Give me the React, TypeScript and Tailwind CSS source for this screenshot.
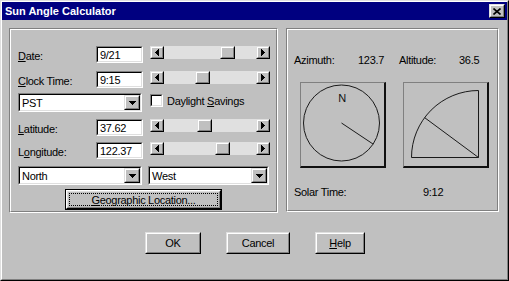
import React from "react";

type P = { className?: string; children?: React.ReactNode };

function Sunken({ className = "", children }: P) {
  return (
    <div className={`border border-t-[#808080] border-l-[#808080] border-b-white border-r-white ${className}`}>
      <div className="h-full w-full border border-t-black border-l-black border-b-[#dfdfdf] border-r-[#dfdfdf] bg-white flex items-center">
        {children}
      </div>
    </div>
  );
}

function Raised({ className = "", children }: P) {
  return (
    <div className={`border border-t-[#dfdfdf] border-l-[#dfdfdf] border-b-black border-r-black bg-[#c0c0c0] ${className}`}>
      <div className="h-full w-full border border-t-white border-l-white border-b-[#808080] border-r-[#808080] flex items-center justify-center">
        {children}
      </div>
    </div>
  );
}

function LeftTri() {
  return (
    <svg width="4" height="7" viewBox="0 0 4 7" shapeRendering="crispEdges">
      <polygon points="4,0 0,3.5 4,7" fill="black" />
    </svg>
  );
}
function RightTri() {
  return (
    <svg width="4" height="7" viewBox="0 0 4 7" shapeRendering="crispEdges">
      <polygon points="0,0 4,3.5 0,7" fill="black" />
    </svg>
  );
}
function DownTri() {
  return (
    <svg width="7" height="4" viewBox="0 0 7 4" shapeRendering="crispEdges">
      <polygon points="0,0 7,0 3.5,4" fill="black" />
    </svg>
  );
}

function Slider({ thumb }: { thumb: string }) {
  return (
    <div className="flex w-[120px] h-[13px]">
      <Raised className="w-[14px] h-[13px]">
        <LeftTri />
      </Raised>
      <div className="flex-1 bg-[#e0e0e0] flex">
        <Raised className={`${thumb} w-[15px] h-[13px]`} />
      </div>
      <Raised className="w-[14px] h-[13px]">
        <RightTri />
      </Raised>
    </div>
  );
}

function Combo({ className = "", text }: { className?: string; text: string }) {
  return (
    <Sunken className={className}>
      <div className="flex-1 pl-[2px] leading-[12px]">{text}</div>
      <Raised className="w-[16px] h-full">
        <DownTri />
      </Raised>
    </Sunken>
  );
}

function Edit({ text }: { text: string }) {
  return (
    <Sunken className="w-[47px] h-[17px]">
      <div className="pl-[2px] leading-[12px]">{text}</div>
    </Sunken>
  );
}

function Group({ className = "", children, inner = "" }: P & { inner?: string }) {
  return (
    <div className={`border border-t-[#808080] border-l-[#808080] border-b-white border-r-white ${className}`}>
      <div className={`h-full w-full border border-t-white border-l-white border-b-[#808080] border-r-[#808080] flex flex-col ${inner}`}>
        {children}
      </div>
    </div>
  );
}

function Compass() {
  const cx = 40.5, cy = 40, r = 38;
  const a = (123.7 * Math.PI) / 180;
  return (
    <div className="w-[86px] h-[86px] border-t border-l border-t-[#808080] border-l-[#808080] border-b-2 border-r-2 border-b-[#101010] border-r-[#101010]">
      <svg width="83" height="83" viewBox="0 0 83 83">
        <circle cx={cx} cy={cy} r={r} fill="none" stroke="#1a1a1a" strokeWidth="1" />
        <line x1={cx} y1={cy} x2={cx + r * Math.sin(a)} y2={cy - r * Math.cos(a)} stroke="#1a1a1a" strokeWidth="1" />
        <text x="41" y="19" textAnchor="middle" fontSize="11" fontFamily="Liberation Sans, Arial, sans-serif" fill="#111">N</text>
      </svg>
    </div>
  );
}

function AltitudeView() {
  const a = (36.5 * Math.PI) / 180;
  return (
    <div className="w-[86px] h-[86px] border-t border-l border-t-[#808080] border-l-[#808080] border-b-2 border-r-2 border-b-[#101010] border-r-[#101010]">
      <svg width="83" height="83" viewBox="0 0 83 83">
        <path d="M74.5 7.5 A67 67 0 0 0 7.5 74.5 L74.5 74.5 Z" fill="none" stroke="#1a1a1a" strokeWidth="1" />
        <line x1="74.5" y1="74.5" x2={74.5 - 67 * Math.cos(a)} y2={74.5 - 67 * Math.sin(a)} stroke="#1a1a1a" strokeWidth="1" />
      </svg>
    </div>
  );
}

function Btn({ className = "", children }: P) {
  return (
    <Raised className={`h-[22px] ${className}`}>
      <span className="leading-[12px]">{children}</span>
    </Raised>
  );
}

export default function App() {
  return (
    <div className="w-[509px] h-[281px] bg-[#c0c0c0] font-['Liberation_Sans',Arial,sans-serif] text-[11px] tracking-[-0.3px] text-black border border-t-[#dfdfdf] border-l-[#dfdfdf] border-b-black border-r-black">
      <div className="h-full w-full border border-t-white border-l-white border-b-[#808080] border-r-[#808080] flex flex-col">
        {/* Title bar */}
        <div className="h-[18px] bg-[#000080] flex items-start">
          <div className="flex-1 pl-[3px] pt-[3px] text-white font-bold leading-[13px] tracking-normal">Sun Angle Calculator</div>
          <Raised className="w-[16px] h-[14px] mt-[2px] mr-[2px]">
            <svg width="8" height="7" viewBox="0 0 8 7">
              <path d="M0.5 0.5 L7.5 6.5 M7.5 0.5 L0.5 6.5" stroke="black" strokeWidth="1.6" />
            </svg>
          </Raised>
        </div>

        {/* Groups */}
        <div className="flex mt-[8px] pl-[7px] gap-[8px]">
          <Group className="w-[269px] h-[185px]" inner="pl-[7px] pt-[16px]">
            <div className="flex h-[17px]">
              <div className="w-[78px] pt-[4px] leading-[12px]"><u>D</u>ate:</div>
              <Edit text="9/21" />
              <div className="ml-[7px]"><Slider thumb="ml-[56px]" /></div>
            </div>
            <div className="flex h-[17px] mt-[8px]">
              <div className="w-[78px] pt-[4px] leading-[12px]"><u>C</u>lock Time:</div>
              <Edit text="9:15" />
              <div className="ml-[7px]"><Slider thumb="ml-[31px]" /></div>
            </div>
            <div className="flex h-[19px] mt-[5px] items-start">
              <Combo className="w-[124px] h-[19px]" text="PST" />
              <div className="ml-[8px] mt-[1px] flex items-center">
                <Sunken className="w-[13px] h-[13px]" />
                <span className="ml-[4px] leading-[12px]">Daylight <u>S</u>avings</span>
              </div>
            </div>
            <div className="flex h-[17px] mt-[7px]">
              <div className="w-[78px] pt-[4px] leading-[12px]"><u>L</u>atitude:</div>
              <Edit text="37.62" />
              <div className="ml-[7px]"><Slider thumb="ml-[33px]" /></div>
            </div>
            <div className="flex h-[17px] mt-[6px]">
              <div className="w-[78px] pt-[4px] leading-[12px]">L<u>o</u>ngitude:</div>
              <Edit text="122.37" />
              <div className="ml-[7px]"><Slider thumb="ml-[51px]" /></div>
            </div>
            <div className="flex h-[19px] mt-[7px]">
              <Combo className="w-[124px] h-[19px]" text="North" />
              <Combo className="ml-[6px] w-[121px] h-[19px]" text="West" />
            </div>
            <div className="flex mt-[4px] pl-[47px]">
              <div className="w-[157px] h-[21px] border border-black">
                <div className="h-full w-full border border-t-white border-l-white border-b-black border-r-black">
                  <div className="h-full w-full border border-t-[#dfdfdf] border-l-[#dfdfdf] border-b-[#808080] border-r-[#808080] p-[1px]">
                    <div className="h-full w-full border border-dotted border-black flex items-center justify-center leading-[12px]">
                      <span><u>G</u>eographic Location...</span>
                    </div>
                  </div>
                </div>
              </div>
            </div>
          </Group>

          <Group className="w-[213px] h-[184px]" inner="pl-[6px] pt-[24px]">
            <div className="flex leading-[12px]">
              <div className="w-[64px]">Azimuth:</div>
              <div className="w-[41px]">123.7</div>
              <div className="w-[60px]">Altitude:</div>
              <div>36.5</div>
            </div>
            <div className="flex mt-[16px] pl-[6px]">
              <Compass />
              <div className="ml-[17px]"><AltitudeView /></div>
            </div>
            <div className="flex mt-[18px] leading-[12px]">
              <div className="w-[129px]">Solar Time:</div>
              <div>9:12</div>
            </div>
          </Group>
        </div>

        {/* Buttons */}
        <div className="flex mt-[19px] pl-[143px]">
          <Btn className="w-[56px]">OK</Btn>
          <Btn className="w-[64px] ml-[25px]">Cancel</Btn>
          <Btn className="w-[50px] ml-[25px]"><u>H</u>elp</Btn>
        </div>
      </div>
    </div>
  );
}
